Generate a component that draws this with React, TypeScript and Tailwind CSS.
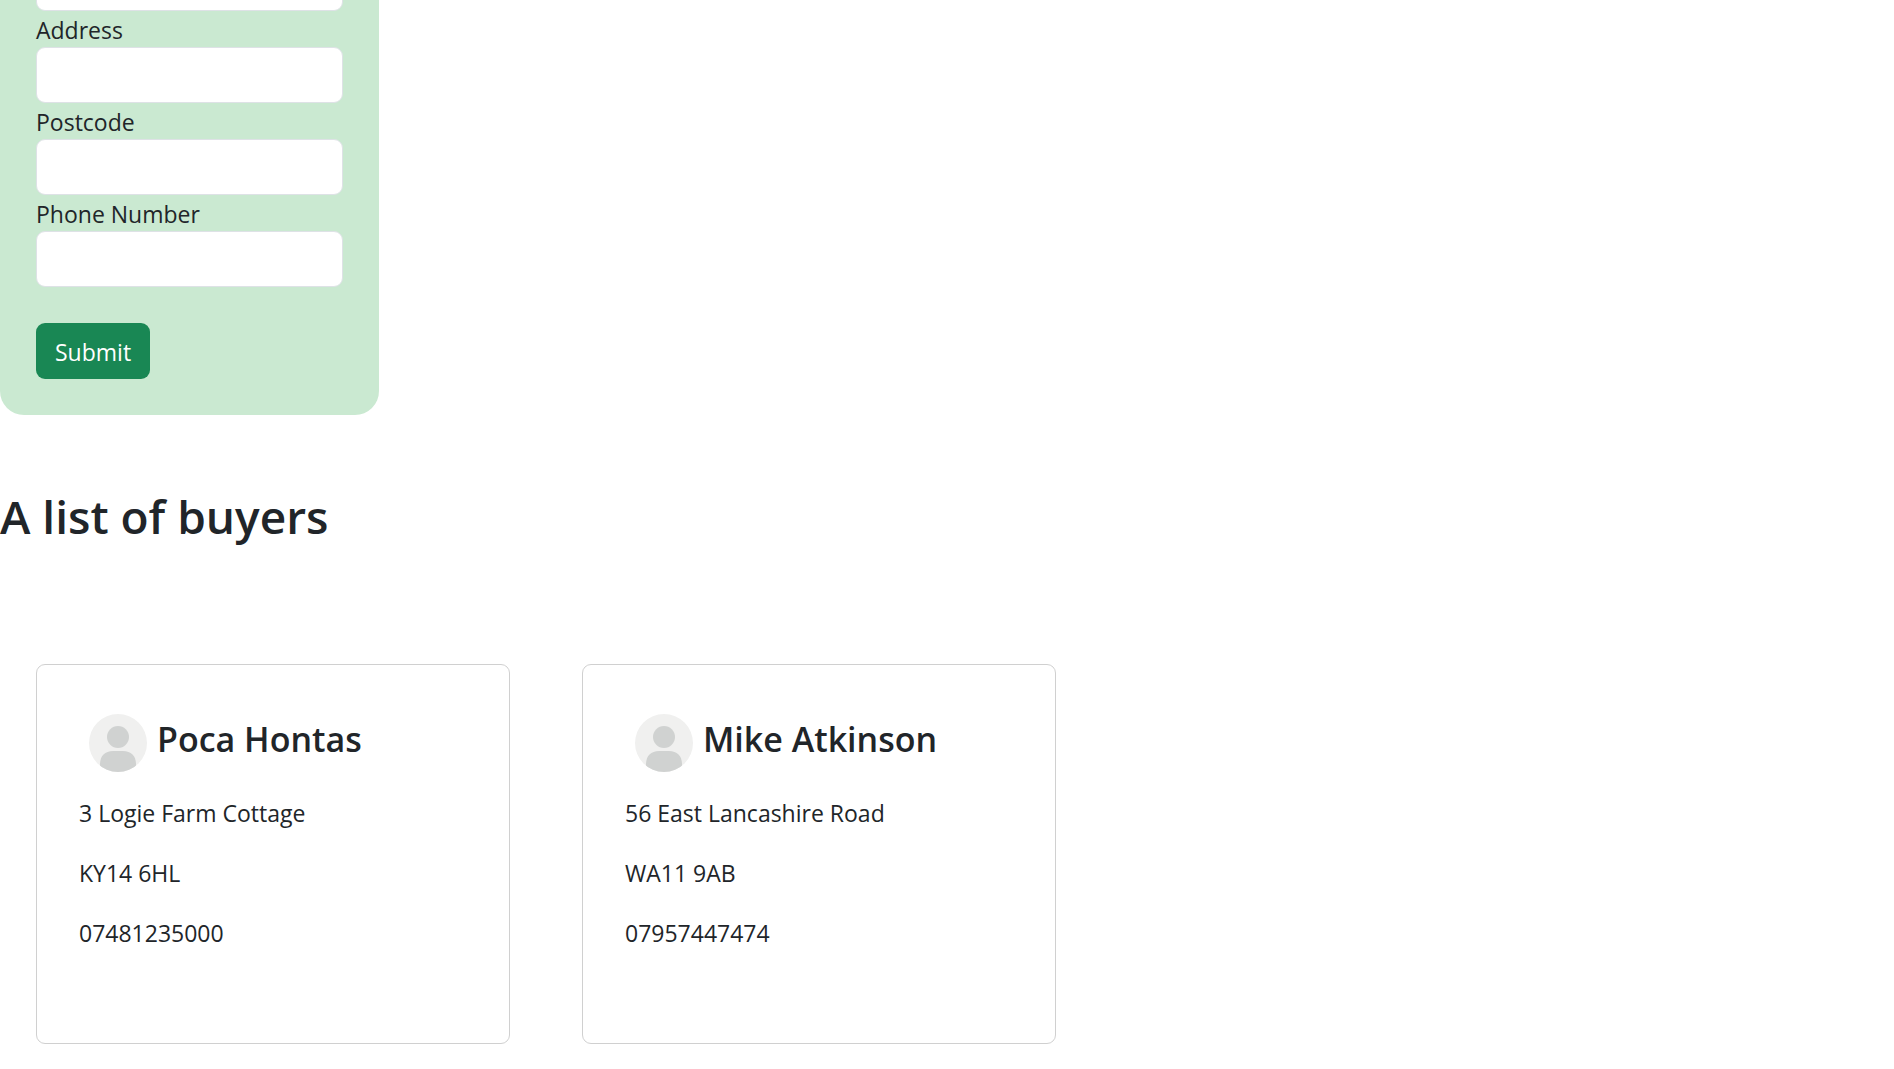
import { useId } from "react";

type Buyer = { name: string; address: string; postcode: string; phone: string };

const buyers: Buyer[] = [
  { name: "Poca Hontas", address: "3 Logie Farm Cottage", postcode: "KY14 6HL", phone: "07481235000" },
  { name: "Mike Atkinson", address: "56 East Lancashire Road", postcode: "WA11 9AB", phone: "07957447474" },
];

const inputClass =
  "block h-14 w-full shrink-0 rounded-[9px] border border-[#dee2e6] bg-white px-4 outline-none focus:border-[#86b7fe]";

function Field({ label }: { label: string }) {
  const id = useId();
  return (
    <div>
      <label htmlFor={id} className="block pt-0.5 leading-[34px]">
        {label}
      </label>
      <input id={id} type="text" className={inputClass} />
    </div>
  );
}

function Avatar() {
  const clip = useId();
  return (
    <svg viewBox="0 0 58 58" className="size-[58px] shrink-0" aria-hidden="true">
      <clipPath id={clip}>
        <circle cx="29" cy="29" r="29" />
      </clipPath>
      <g clipPath={`url(#${clip})`}>
        <rect width="58" height="58" fill="#f0f0ef" />
        <circle cx="29" cy="23" r="11" fill="#d0d2d1" />
        <path d="M11 58V50C11 42 16 37 24 37H34C42 37 47 42 47 50V58Z" fill="#d0d2d1" />
      </g>
    </svg>
  );
}

function BuyerCard({ buyer }: { buyer: Buyer }) {
  return (
    <article className="w-full max-w-[474px] rounded-[9px] border border-[#d0d0d0] bg-white px-[42px] pt-[49px] pb-[92px]">
      <div className="flex gap-2.5 pl-2.5">
        <Avatar />
        <h2 className="text-[34px] leading-[50px] font-semibold">{buyer.name}</h2>
      </div>
      <div className="mt-[23px] flex flex-col gap-6 leading-9">
        <p>{buyer.address}</p>
        <p>{buyer.postcode}</p>
        <p>{buyer.phone}</p>
      </div>
    </article>
  );
}

export default function App() {
  return (
    <main className="bg-white font-['Segoe_UI','Open_Sans',sans-serif] text-[23px] text-[#212529]">
      <form
        className="w-full max-w-[379px] rounded-b-3xl bg-[#cae9d1] px-9 pb-9"
        onSubmit={(e) => e.preventDefault()}
      >
        <div className="flex h-[11px] flex-col justify-end overflow-hidden">
          <input type="text" aria-label="Name" className={inputClass} />
        </div>
        <Field label="Address" />
        <Field label="Postcode" />
        <Field label="Phone Number" />
        <button type="submit" className="mt-9 h-14 rounded-[9px] bg-[#198754] px-[19px] pt-0.5 text-white">
          Submit
        </button>
      </form>
      <h1 className="mt-[72px] text-[46px] leading-[58px] font-semibold">A list of buyers</h1>
      <section className="mt-[119px] flex gap-[72px] px-9 pb-6">
        {buyers.map((b) => (
          <BuyerCard key={b.name} buyer={b} />
        ))}
      </section>
    </main>
  );
}
